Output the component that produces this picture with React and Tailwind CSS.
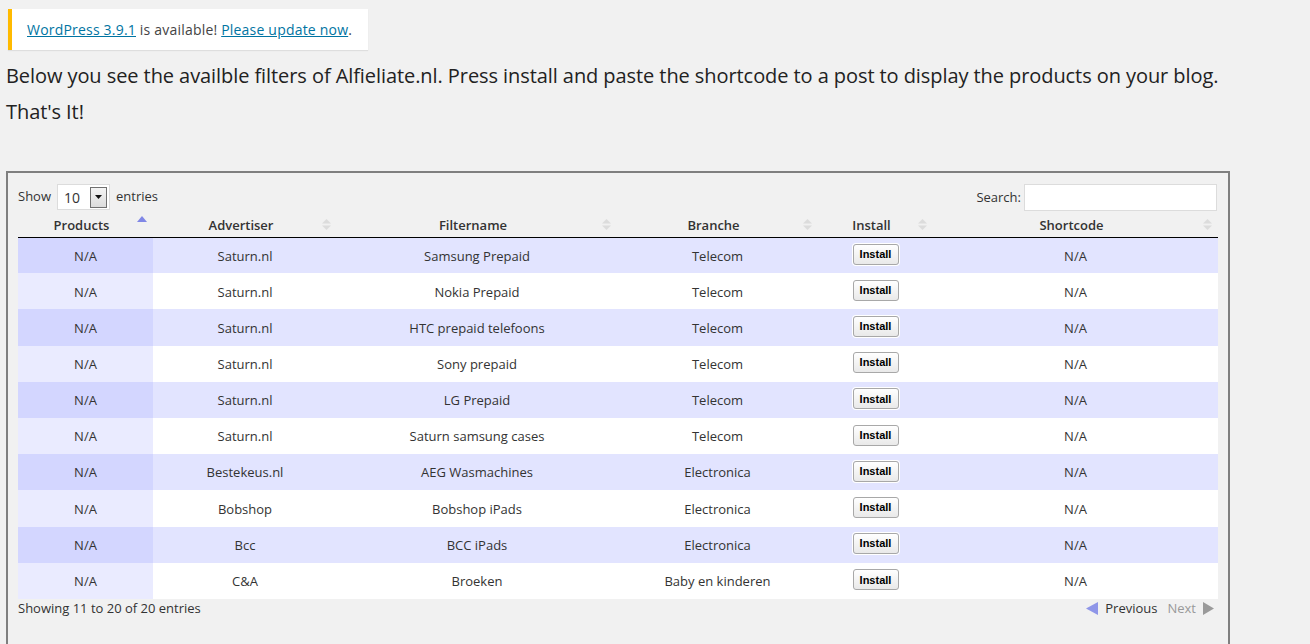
import React from "react";

const rows = [
  { adv: "Saturn.nl", filter: "Samsung Prepaid", branche: "Telecom" },
  { adv: "Saturn.nl", filter: "Nokia Prepaid", branche: "Telecom" },
  { adv: "Saturn.nl", filter: "HTC prepaid telefoons", branche: "Telecom" },
  { adv: "Saturn.nl", filter: "Sony prepaid", branche: "Telecom" },
  { adv: "Saturn.nl", filter: "LG Prepaid", branche: "Telecom" },
  { adv: "Saturn.nl", filter: "Saturn samsung cases", branche: "Telecom" },
  { adv: "Bestekeus.nl", filter: "AEG Wasmachines", branche: "Electronica" },
  { adv: "Bobshop", filter: "Bobshop iPads", branche: "Electronica" },
  { adv: "Bcc", filter: "BCC iPads", branche: "Electronica" },
  { adv: "C&A", filter: "Broeken", branche: "Baby en kinderen" },
];

const columns = [
  { name: "Products", w: "w-[135px]", active: true },
  { name: "Advertiser", w: "w-[184px]" },
  { name: "Filtername", w: "w-[280px]" },
  { name: "Branche", w: "w-[201px]" },
  { name: "Install", w: "w-[115px]" },
  { name: "Shortcode", w: "w-[285px]" },
];

const SortIcon = ({ active }) =>
  active ? (
    <svg className="absolute right-[6px] top-[5px]" width="10" height="6" viewBox="0 0 10 6">
      <path d="M5 0 L10 6 L0 6 Z" fill="#8087e6" />
    </svg>
  ) : (
    <svg className="absolute right-[6px] top-[8px]" width="9" height="11" viewBox="0 0 9 11">
      <path d="M4.5 0 L9 4.5 L0 4.5 Z" fill="#dcdcdc" />
      <path d="M4.5 11 L9 6.5 L0 6.5 Z" fill="#dcdcdc" />
    </svg>
  );

const InstallButton = () => (
  <button
    type="button"
    className="h-[21px] w-[46px] rounded-[3px] border border-[#a8a8a8] bg-gradient-to-b from-white to-[#e9e9e9] text-[11px] font-bold text-black shadow-[0_0_0_1px_#fff]"
    style={{ fontFamily: "'Liberation Sans', Arial, sans-serif" }}
  >
    Install
  </button>
);

export default function App() {
  return (
    <div
      className="min-h-[644px] overflow-hidden bg-[#f1f1f1] pt-[9px] text-[#333]"
      style={{ fontFamily: "'Open Sans', sans-serif" }}
    >
      <div className="ml-[8px] h-[41px] w-[360px] whitespace-nowrap border-l-4 border-[#ffba00] bg-white px-[15px] text-[14px] leading-[41px] tracking-[0.2px] text-[#444] shadow-[0_1px_1px_rgba(0,0,0,0.08)]">
        <a className="text-[#0074a2] underline">WordPress 3.9.1</a> is available!{" "}
        <a className="text-[#0074a2] underline">Please update now</a>.
      </div>

      <div className="ml-[6px] mt-[8px] text-[20px] leading-[36px] tracking-[-0.075px] text-[#222]">
        <p>
          Below you see the availble filters of Alfieliate.nl. Press install and paste the shortcode to a post to
          display the products on your blog.
        </p>
        <p>That's It!</p>
      </div>

      <div className="ml-[6px] mt-[41px] h-[480px] w-[1224px] border-2 border-[#7f7f7f] px-[10px] pt-[11px] text-[13px]">
        <div className="flex items-start justify-between">
          <div className="flex h-[26px] items-center gap-[6px]">
            <span>Show</span>
            <div className="flex h-[26px] w-[53px] items-center justify-between border border-[#dcdcdc] bg-white pl-[6px] pr-[2px] text-[14px]">
              <span>10</span>
              <div className="flex h-[21px] w-[17px] items-center justify-center border border-[#707070] bg-gradient-to-b from-[#f4f4f4] to-[#dcdcdc]">
                <svg width="7" height="4" viewBox="0 0 7 4">
                  <path d="M0 0 L7 0 L3.5 4 Z" fill="#111" />
                </svg>
              </div>
            </div>
            <span>entries</span>
          </div>
          <div className="flex h-[27px] items-center gap-[3px] pr-[1px]">
            <span>Search:</span>
            <div className="h-[27px] w-[193px] border border-[#dcdcdc] bg-white" />
          </div>
        </div>

        <table className="w-[1200px] table-fixed border-collapse">
          <thead>
            <tr className="h-[26px] border-b border-black">
              {columns.map((c) => (
                <th
                  key={c.name}
                  className={`${c.w} relative pl-[10px] pr-[18px] pt-[4px] text-center font-semibold`}
                >
                  {c.name}
                  <SortIcon active={c.active} />
                </th>
              ))}
            </tr>
          </thead>
          <tbody>
            {rows.map((r, i) => {
              const odd = i % 2 === 0;
              return (
                <tr key={i} className={`h-[36.2px] text-center ${odd ? "bg-[#e2e4ff]" : "bg-white"}`}>
                  <td className={`pt-[2px] ${odd ? "bg-[#d3d6ff]" : "bg-[#eaebff]"}`}>N/A</td>
                  <td className="pt-[2px]">{r.adv}</td>
                  <td className="pt-[2px]">{r.filter}</td>
                  <td className="pt-[2px]">{r.branche}</td>
                  <td className="pb-[2px]">
                    <InstallButton />
                  </td>
                  <td className="pt-[2px]">N/A</td>
                </tr>
              );
            })}
          </tbody>
        </table>

        <div className="flex h-[20px] items-center justify-between">
          <span>Showing 11 to 20 of 20 entries</span>
          <div className="flex items-center pr-[4px]">
            <svg className="mr-[7px]" width="12" height="13" viewBox="0 0 12 13">
              <path d="M0 6.5 L12 0 L12 13 Z" fill="#8f96e8" />
            </svg>
            <span>Previous</span>
            <span className="ml-[10px] text-[#999]">Next</span>
            <svg className="ml-[7px]" width="11" height="13" viewBox="0 0 11 13">
              <path d="M11 6.5 L0 0 L0 13 Z" fill="#9a9a9a" />
            </svg>
          </div>
        </div>
      </div>
    </div>
  );
}
